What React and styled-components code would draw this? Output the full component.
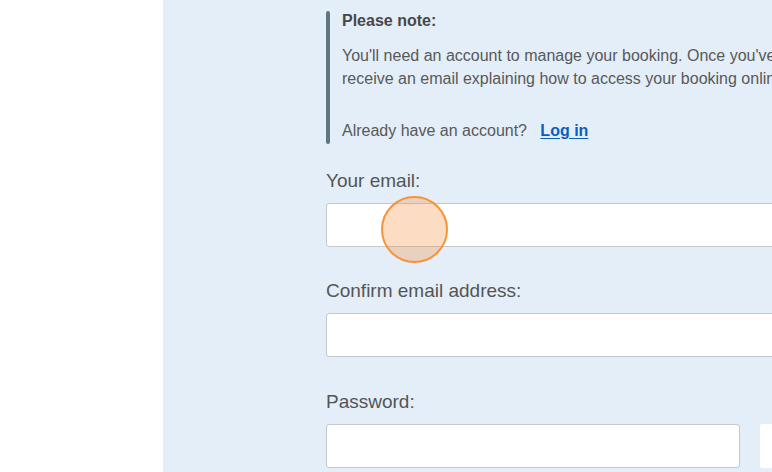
import styled, { createGlobalStyle } from "styled-components";

const GlobalStyle = createGlobalStyle`
  html, body {
    margin: 0;
    padding: 0;
    height: 472px;
    overflow: hidden;
    background: #ffffff;
    font-family: "Liberation Sans", Arial, sans-serif;
  }
`

const App = () => {
  return (
    <>
      <GlobalStyle />
      <StPage>
        <StGutter />
        <StPanel>
          <StForm>
            <StNote>
              <StNoteBar />
              <StNoteBody>
                <StNoteTitle>Please note:</StNoteTitle>
                <StNoteText>
                  You'll need an account to manage your booking. Once you've created one, you'll
                  <br />
                  receive an email explaining how to access your booking online.
                </StNoteText>
                <StNoteText gap={29}>
                  Already have an account?&nbsp;&nbsp; <StLink href="#">Log in</StLink>
                </StNoteText>
              </StNoteBody>
            </StNote>

            <StField top={26}>
              <StLabel>Your email:</StLabel>
              <StInput type="email" />
            </StField>
            <StField top={32}>
              <StLabel>Confirm email address:</StLabel>
              <StInput type="email" />
            </StField>
            <StField top={33}>
              <StLabel>Password:</StLabel>
              <StPasswordRow>
                <StInput type="password" width={414} />
                <StShowBtn type="button" />
              </StPasswordRow>
            </StField>
          </StForm>
          {/* click marker */}
          <StClickDot />
        </StPanel>
      </StPage>
    </>
  )
}
export default App

const StPage = styled.div`
  display: flex;
  width: 100%;
  height: 472px;
`

const StGutter = styled.div`
  width: 163px;
  flex-shrink: 0;
  background: #ffffff;
`

const StPanel = styled.div`
  position: relative;
  flex: 1;
  background: #e3eef8;
  padding: 11px 0 0 163px;
  overflow: hidden;
`

const StForm = styled.div`
  width: 540px;
  display: flex;
  flex-direction: column;
`

const StNote = styled.div`
  display: flex;
  gap: 12px;
`

const StNoteBar = styled.div`
  width: 4px;
  flex-shrink: 0;
  border-radius: 2px;
  background: #5f7680;
  margin-bottom: -1px;
`

const StNoteBody = styled.div`
  display: flex;
  flex-direction: column;
  padding-bottom: 1px;
`

const StNoteTitle = styled.p`
  margin: 0;
  font-size: 16px;
  line-height: 20px;
  font-weight: 700;
  color: #474747;
`

const StNoteText = styled.p`
  margin: ${props => props.gap || 13}px 0 0;
  font-size: 16px;
  line-height: 23px;
  color: #595959;
  white-space: nowrap;
`

const StLink = styled.a`
  color: #0a5cbf;
  font-weight: 700;
  text-decoration: underline;
  text-underline-offset: 2px;
`

const StField = styled.div`
  display: flex;
  flex-direction: column;
  margin-top: ${props => props.top}px;
`

const StLabel = styled.label`
  font-size: 19px;
  line-height: 24px;
  color: #555555;
  margin-bottom: 10px;
`

const StInput = styled.input`
  box-sizing: border-box;
  width: ${props => props.width ? `${props.width}px` : "100%"};
  height: 44px;
  margin: 0;
  padding: 0 10px;
  border: 1px solid #c3c8cc;
  border-radius: 3px;
  background: #ffffff;
  outline: none;
  font-size: 16px;
  font-family: inherit;
`

const StPasswordRow = styled.div`
  display: flex;
  gap: 20px;
`

const StShowBtn = styled.button`
  flex: 1;
  height: 44px;
  border: none;
  border-radius: 2px;
  background: #ffffff;
`

const StClickDot = styled.div`
  position: absolute;
  left: 218px;
  top: 196px;
  width: 67px;
  height: 67px;
  box-sizing: border-box;
  border-radius: 50%;
  border: 2px solid #f7943a;
  background: rgba(250, 140, 60, 0.3);
`
